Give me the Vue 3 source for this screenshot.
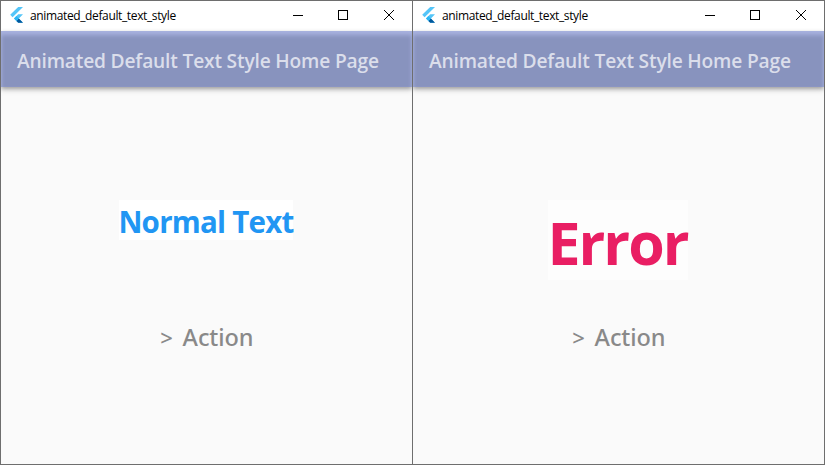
<script setup>
const windows = [
  { id: 'normal', text: 'Normal Text' },
  { id: 'error', text: 'Error' },
]
</script>

<template>
  <main class="desktop">
    <section v-for="w in windows" :key="w.id" class="window">
      <header class="titlebar">
        <svg class="logo" width="14" height="16" viewBox="0 0 14 16">
          <path d="M8.2 0H13L2.6 10.2 0.2 7.8Z" fill="#54c5f8" />
          <path d="M8.2 7.3H13L8.9 11.5 13 15.8H8.2L4 11.5Z" fill="#54c5f8" />
          <path d="M6.4 13.9 8.9 11.5 13 15.8H8.2Z" fill="#01579b" />
          <path d="M4 11.5 6.4 9.1 8.9 11.5 6.4 13.9Z" fill="#29b6f6" />
        </svg>
        <span class="caption">animated_default_text_style</span>
        <svg class="controls" width="112" height="12" viewBox="0 0 112 12" fill="none" stroke="#000" shape-rendering="crispEdges">
          <path d="M0 6.5H10" />
          <rect x="45.5" y="1.5" width="9" height="9" />
          <path d="M91 1L101 11M101 1L91 11" shape-rendering="auto" />
        </svg>
      </header>
      <div class="appbar"><h1>Animated Default Text Style Home Page</h1></div>
      <div class="body">
        <div class="stage">
          <div class="message" :class="w.id"><span>{{ w.text }}</span></div>
        </div>
        <button class="action"><span class="prompt">&gt;</span><span>Action</span></button>
      </div>
    </section>
  </main>
</template>

<style>
body { margin: 0; overflow: hidden; }
</style>

<style scoped>
.desktop {
  box-sizing: border-box;
  display: grid;
  grid-template-columns: 411px 411px;
  column-gap: 1px;
  width: 825px;
  height: 465px;
  padding: 1px;
  background: #6e6e6e;
  font-family: "Noto Sans", "Open Sans", sans-serif;
}
.window {
  display: flex;
  flex-direction: column;
  height: 463px;
  overflow: hidden;
  background: #fafafa;
}
.titlebar {
  display: flex;
  align-items: center;
  flex: 0 0 30px;
  padding-left: 9px;
  background: #fff;
}
.logo { margin-right: 6px; transform: translateY(-1px); }
.caption {
  width: 152px;
  font-family: "Open Sans", sans-serif;
  font-size: 12px;
  line-height: 16px;
  letter-spacing: -0.37px;
  white-space: nowrap;
  color: #000;
}
.controls { margin-left: auto; margin-right: 7px; transform: translateY(-1px); }
.appbar {
  position: relative;
  display: flex;
  align-items: center;
  flex: 0 0 56px;
  padding: 3px 16px 0;
  box-sizing: border-box;
  background: #8893be;
  box-shadow: inset 0 6px 4px -2px #a8b2df, inset 3px 0 4px -3px #a8b2df,
    inset -3px 0 4px -3px #a8b2df, 0 2px 4px rgba(0, 0, 0, 0.3), 0 3px 7px rgba(0, 0, 0, 0.1);
}
h1 {
  margin: 0;
  font-family: "Open Sans", sans-serif;
  font-size: 19.2px;
  font-weight: 650;
  line-height: 27px;
  letter-spacing: -0.18px;
  white-space: nowrap;
  color: #dbdeeb;
}
.body {
  display: flex;
  flex-direction: column;
  align-items: center;
  flex: 1;
  padding-top: 113px;
}
.stage { height: 119px; }
.message {
  display: flex;
  align-items: center;
  background: #fff;
  font-family: "Open Sans", sans-serif;
  font-weight: 700;
  white-space: nowrap;
}
.normal {
  justify-content: center;
  width: 174px;
  height: 40px;
  margin-right: 1px;
  font-size: 29.5px;
  letter-spacing: -0.75px;
  color: #2196f3;
}
.normal span { padding-top: 2px; }
.error {
  box-sizing: border-box;
  width: 140px;
  height: 80px;
  margin-right: 2px;
  background: #fdfdfd;
  font-size: 59px;
  letter-spacing: -2px;
  color: #e91e63;
}
.error span { padding-top: 4px; }
.action {
  display: flex;
  gap: 9px;
  margin: 0;
  padding: 0;
  border: 0;
  background: none;
  font: 500 23.5px/36px "Noto Sans", "Open Sans", sans-serif;
  letter-spacing: -0.1px;
  color: #898989;
}
.prompt { width: 14px; font-size: 22px; }
</style>
